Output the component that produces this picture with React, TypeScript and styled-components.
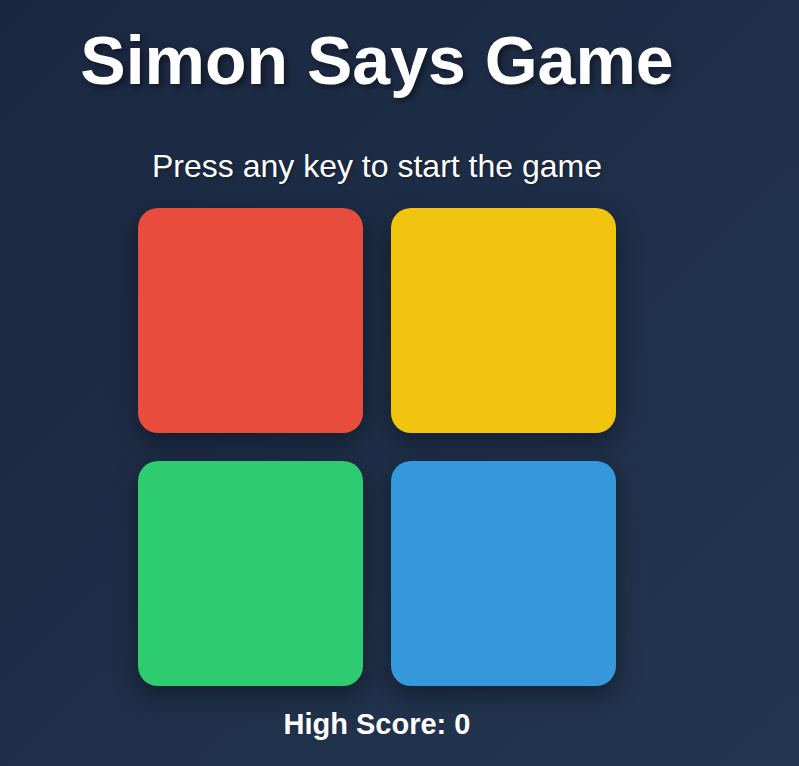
import React from "react";
import styled, { createGlobalStyle } from "styled-components";

const Global = createGlobalStyle`
  html, body { margin: 0; padding: 0; }
  body {
    min-height: 766px;
    background: linear-gradient(135deg, #1a2740 0%, #233650 100%);
    font-family: "Liberation Sans", Arial, sans-serif;
    color: #ffffff;
    overflow: hidden;
  }
`;

const Page = styled.main`
  width: 754px;
  display: flex;
  flex-direction: column;
  align-items: center;
`;

const Title = styled.h1`
  margin: 20px 0 0;
  font-size: 68px;
  font-weight: 700;
  line-height: 80px;
  text-shadow: 3px 3px 6px rgba(0, 0, 0, 0.45);
`;

const Status = styled.p`
  margin: 47px 0 0;
  font-size: 32px;
  line-height: 38px;
  text-shadow: 1px 1px 3px rgba(0, 0, 0, 0.4);
`;

const Board = styled.div`
  margin-top: 23px;
  display: grid;
  grid-template-columns: repeat(2, 225px);
  grid-auto-rows: 225px;
  gap: 28px;
`;

const Pad = styled.button<{ $color: string }>`
  border: none;
  padding: 0;
  border-radius: 20px;
  background: ${(p) => p.$color};
  box-shadow: 0 8px 24px rgba(0, 0, 0, 0.4);
  cursor: pointer;
`;

const Score = styled.p`
  margin: 22px 0 0;
  font-size: 29px;
  font-weight: 700;
  line-height: 32px;
`;

const colors = ["#e74c3c", "#f1c40f", "#2ecc71", "#3498db"];

export default function App() {
  return (
    <>
      <Global />
      <Page>
        <Title>Simon Says Game</Title>
        <Status>Press any key to start the game</Status>
        <Board>
          {colors.map((c) => (
            <Pad key={c} $color={c} aria-label={c} />
          ))}
        </Board>
        <Score>High Score: 0</Score>
      </Page>
    </>
  );
}
